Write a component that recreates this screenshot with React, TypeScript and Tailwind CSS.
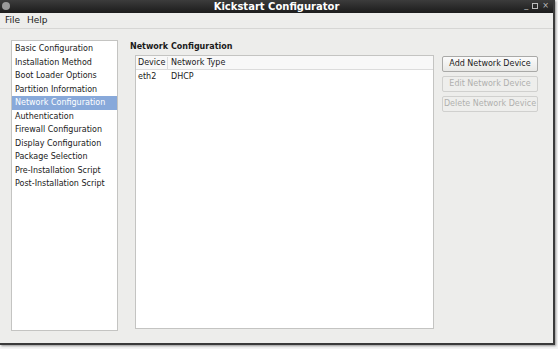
import React from "react";

const items = [
  "Basic Configuration",
  "Installation Method",
  "Boot Loader Options",
  "Partition Information",
  "Network Configuration",
  "Authentication",
  "Firewall Configuration",
  "Display Configuration",
  "Package Selection",
  "Pre-Installation Script",
  "Post-Installation Script",
];

export default function App() {
  return (
    <div className="w-[558px] h-[349px] bg-[#f4f4f4] overflow-hidden" style={{ fontFamily: '"DejaVu Sans", sans-serif' }}>
      <div className="w-[555px] h-[345px] flex flex-col bg-[#ededeb] border-r-2 border-b-2 border-[#3a3a3a] shadow-[1px_1px_2px_rgba(0,0,0,0.4)]">
        {/* title bar */}
        <div className="h-[13px] relative flex items-center justify-center bg-gradient-to-b from-[#3c3c3c] to-[#1c1c1c]">
          <div className="absolute left-[2px] top-[2px] w-[8px] h-[8px] rounded-sm bg-[#9a9a9a]" />
          <span className="text-[10px] font-bold text-white leading-none">Kickstart Configurator</span>
          <div className="absolute right-[4px] top-[2px] flex items-center gap-[4px] text-[#bdbdbd] text-[8px] leading-none">
            <span>_</span>
            <span className="w-[6px] h-[6px] border border-[#bdbdbd]" />
            <span>×</span>
          </div>
        </div>
        {/* menu */}
        <div className="h-[16px] flex items-center gap-[7px] px-[5px] pt-[1px] text-[9px] text-[#1a1a1a] border-b border-[#d6d6d4]">
          <span>File</span>
          <span>Help</span>
        </div>
        {/* body */}
        <div className="flex flex-1 pt-[11px] pl-[11px] pb-[12px]">
          <div className="w-[107px] bg-white border border-[#c4c4c2] pt-[1px]">
            {items.map((it) => (
              <div
                key={it}
                className={
                  "h-[13.5px] pl-[3px] text-[8px] leading-[13.5px] whitespace-nowrap " +
                  (it === "Network Configuration" ? "bg-[#88a9da] text-white" : "text-[#1a1a1a]")
                }
              >
                {it}
              </div>
            ))}
          </div>
          <div className="flex flex-col ml-[12px]">
            <div className="text-[8px] font-bold text-[#1a1a1a] leading-none mt-[3px] mb-[4px]">Network Configuration</div>
            <div className="flex gap-[8px] ml-[5px] flex-1">
              <div className="w-[299px] h-[274px] bg-white border border-[#c4c4c2]">
                <div className="flex h-[14px] items-center text-[8px] text-[#1a1a1a] border-b border-[#dcdcdc] bg-[#f8f8f8]">
                  <div className="w-[32px] pl-[2px] border-r border-[#dcdcdc]">Device</div>
                  <div className="pl-[3px]">Network Type</div>
                </div>
                <div className="flex h-[14px] items-center text-[8px] text-[#1a1a1a]">
                  <div className="w-[32px] pl-[2px]">eth2</div>
                  <div className="pl-[3px]">DHCP</div>
                </div>
              </div>
              <div className="flex flex-col gap-[4px] pt-[1px]">
                <div className="w-[96px] h-[16px] flex items-center justify-center whitespace-nowrap text-[8px] text-[#1a1a1a] border border-[#a9a9a7] rounded-[2px] bg-gradient-to-b from-[#fbfbfb] to-[#e8e8e6]">Add Network Device</div>
                <div className="w-[96px] h-[16px] flex items-center justify-center whitespace-nowrap text-[8px] text-[#b0b0ae] border border-[#d0d0ce] rounded-[2px] bg-[#eeeeec]">Edit Network Device</div>
                <div className="w-[96px] h-[16px] flex items-center justify-center whitespace-nowrap text-[8px] text-[#b0b0ae] border border-[#d0d0ce] rounded-[2px] bg-[#eeeeec]">Delete Network Device</div>
              </div>
            </div>
          </div>
        </div>
      </div>
    </div>
  );
}
